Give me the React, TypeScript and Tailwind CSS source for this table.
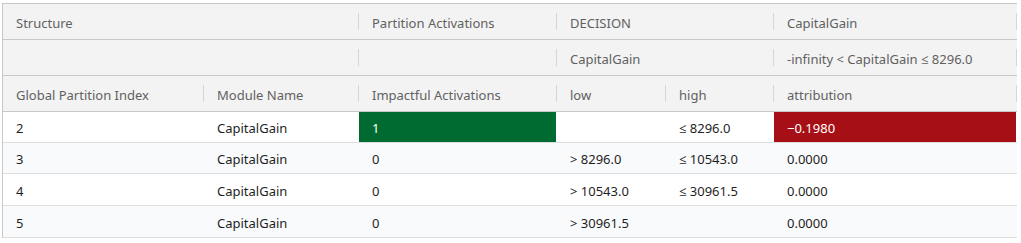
import React from "react";

function Sep() {
  return <div className="w-px h-[17px] bg-[#d6d6d6] shrink-0 -mt-[4px]" />;
}

function HCell({ span, text }: { span?: string; text?: string }) {
  return (
    <div
      className={`${span ?? ""} bg-[#f3f3f3] border-b border-[#c8c8c8] flex items-center justify-between pl-[13px] pt-[4px] min-w-0`}
    >
      <span className="whitespace-nowrap">{text}</span>
      <Sep />
    </div>
  );
}

const rows = [
  { idx: "2", mod: "CapitalGain", act: "1", low: "", high: "≤ 8296.0", attr: "−0.1980", hot: true },
  { idx: "3", mod: "CapitalGain", act: "0", low: "> 8296.0", high: "≤ 10543.0", attr: "0.0000" },
  { idx: "4", mod: "CapitalGain", act: "0", low: "> 10543.0", high: "≤ 30961.5", attr: "0.0000" },
  { idx: "5", mod: "CapitalGain", act: "0", low: "> 30961.5", high: "", attr: "0.0000" },
];
const rbg = ["bg-white", "bg-[#f9fafc]", "bg-white", "bg-[#f9fafc]"];

function DCell({ bg, children, fill }: { bg: string; children?: React.ReactNode; fill?: string }) {
  return (
    <div className={`${bg} border-b border-[#dedede] flex min-w-0`}>
      <div className={`flex-1 flex items-center pl-[13px] pt-[4px] ${fill ?? ""}`}>{children}</div>
    </div>
  );
}

export default function App() {
  return (
    <div
      className="w-[1021px] h-[243px] bg-white pt-[3px] pl-[2px] text-[13px] overflow-hidden"
      style={{ fontFamily: '"Noto Sans", "Open Sans", sans-serif' }}
    >
      <div className="w-[1015px] border-l border-t border-[#c8c8c8] grid grid-cols-[201px_155px_198px_109px_108px_243px] grid-rows-[36px_36px_36px_31px_31px_32px_32px] text-[#616161]">
        <HCell span="col-span-2" text="Structure" />
        <HCell text="Partition Activations" />
        <HCell span="col-span-2" text="DECISION" />
        <HCell text="CapitalGain" />

        <HCell span="col-span-2" />
        <HCell />
        <HCell span="col-span-2" text="CapitalGain" />
        <HCell text="-infinity < CapitalGain ≤ 8296.0" />

        <HCell text="Global Partition Index" />
        <HCell text="Module Name" />
        <HCell text="Impactful Activations" />
        <HCell text="low" />
        <HCell text="high" />
        <HCell text="attribution" />

        {rows.map((r, i) => (
          <React.Fragment key={i}>
            <DCell bg={rbg[i]}>
              <span className="text-[#1f1f1f]">{r.idx}</span>
            </DCell>
            <DCell bg={rbg[i]}>
              <span className="text-[#1f1f1f]">{r.mod}</span>
            </DCell>
            <DCell bg={rbg[i]} fill={r.hot ? "bg-[#006b30] mr-px" : ""}>
              <span className={r.hot ? "text-white" : "text-[#1f1f1f]"}>{r.act}</span>
            </DCell>
            <DCell bg={rbg[i]}>
              <span className="text-[#1f1f1f]">{r.low}</span>
            </DCell>
            <DCell bg={rbg[i]}>
              <span className="text-[#1f1f1f]">{r.high}</span>
            </DCell>
            <DCell bg={rbg[i]} fill={r.hot ? "bg-[#a50f15] mr-px" : ""}>
              <span className={r.hot ? "text-white" : "text-[#1f1f1f]"}>{r.attr}</span>
            </DCell>
          </React.Fragment>
        ))}
      </div>
    </div>
  );
}
